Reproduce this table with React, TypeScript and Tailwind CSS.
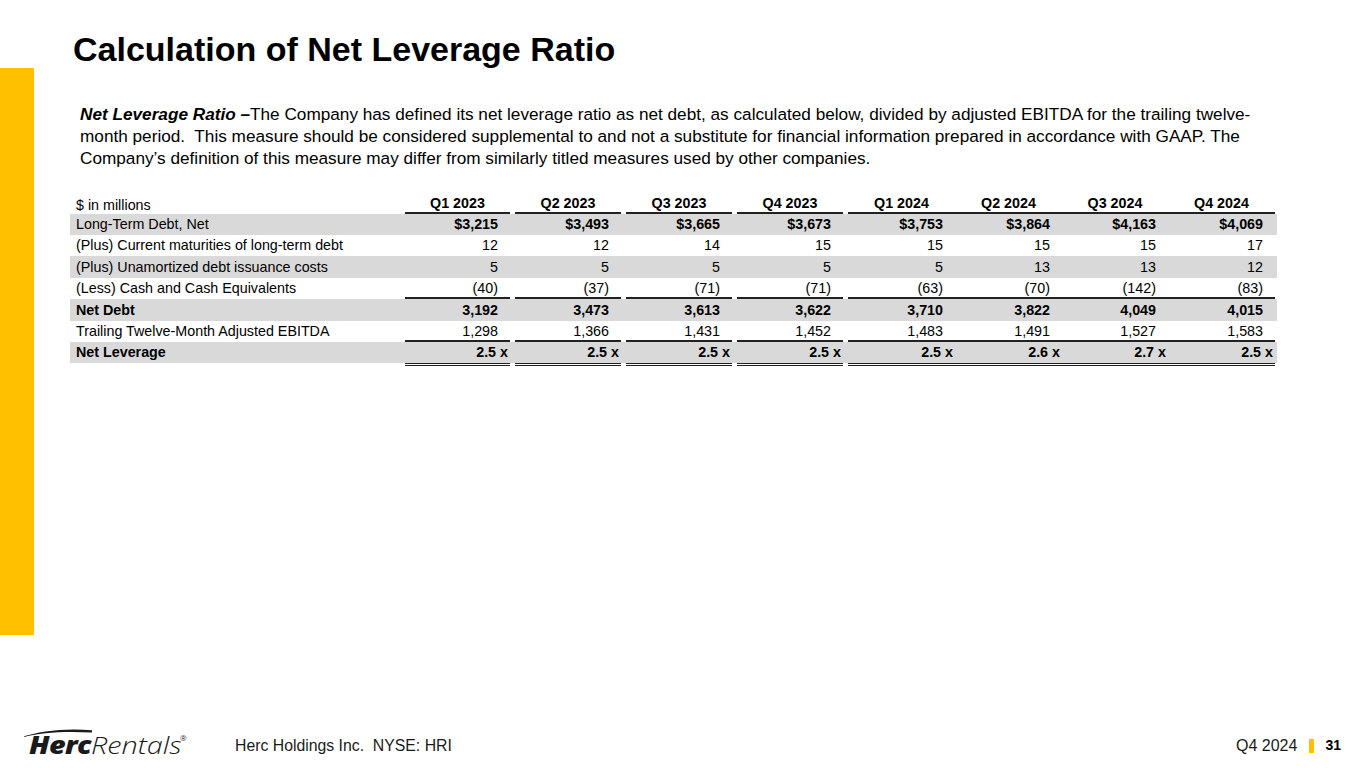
import React from 'react'

const cols = [
  { label: 'Q1 2023', w: 'w-[105px]', gap: false },
  { label: 'Q2 2023', w: 'w-[106px]', gap: true },
  { label: 'Q3 2023', w: 'w-[106px]', gap: true },
  { label: 'Q4 2023', w: 'w-[106px]', gap: true },
  { label: 'Q1 2024', w: 'w-[107px]', gap: true },
  { label: 'Q2 2024', w: 'w-[107px]', gap: false },
  { label: 'Q3 2024', w: 'w-[106px]', gap: false },
  { label: 'Q4 2024', w: 'w-[107px]', gap: false },
]

type Row = {
  label: string
  values: string[]
  h: string
  boldLabel?: boolean
  boldValues?: boolean
  shaded?: boolean
  underline?: boolean
  ratio?: boolean
}

const rows: Row[] = [
  { label: 'Long-Term Debt, Net', values: ['$3,215', '$3,493', '$3,665', '$3,673', '$3,753', '$3,864', '$4,163', '$4,069'], h: 'h-[21px] leading-[21px]', boldValues: true, shaded: true },
  { label: '(Plus) Current maturities of long-term debt', values: ['12', '12', '14', '15', '15', '15', '15', '17'], h: 'h-[21px] leading-[21px]' },
  { label: '(Plus) Unamortized debt issuance costs', values: ['5', '5', '5', '5', '5', '13', '13', '12'], h: 'h-[22px] leading-[22px]', shaded: true },
  { label: '(Less) Cash and Cash Equivalents', values: ['(40)', '(37)', '(71)', '(71)', '(63)', '(70)', '(142)', '(83)'], h: 'h-[21px] leading-[20px]', underline: true },
  { label: 'Net Debt', values: ['3,192', '3,473', '3,613', '3,622', '3,710', '3,822', '4,049', '4,015'], h: 'h-[22px] leading-[22px]', boldLabel: true, boldValues: true, shaded: true },
  { label: 'Trailing Twelve-Month Adjusted EBITDA', values: ['1,298', '1,366', '1,431', '1,452', '1,483', '1,491', '1,527', '1,583'], h: 'h-[21px] leading-[20px]', underline: true },
  { label: 'Net Leverage', values: ['2.5 x', '2.5 x', '2.5 x', '2.5 x', '2.5 x', '2.6 x', '2.7 x', '2.5 x'], h: 'h-[21px] leading-[21px]', boldLabel: true, boldValues: true, shaded: true, ratio: true },
]

const HercLogo = () => (
  <div className="relative w-[206px] h-[30px] shrink-0" style={{ fontFamily: '"Open Sans", "Liberation Sans", sans-serif' }}>
    <svg className="absolute left-[-7px] top-[-1px]" width="72" height="10" viewBox="0 0 72 10">
      <path d="M0 9 C 18 3, 42 0, 70 2.2 L 70 4.6 C 44 2.8, 20 4.4, 0 9 Z" fill="#1a1a1a" />
    </svg>
    <div className="absolute left-0 top-[2px] flex items-baseline origin-left scale-x-[1.2] leading-[28px]">
      <span className="text-[24px] font-extrabold italic text-[#1a1a1a] tracking-[-0.5px]">Herc</span>
      <span className="text-[24px] font-light italic text-[#1a1a1a]">Rentals</span>
    </div>
    <span className="absolute left-[151px] top-[3px] text-[8px] text-[#333]">®</span>
  </div>
)

export default function App() {
  return (
    <div
      className="w-[1365px] h-[768px] bg-white flex flex-col overflow-hidden text-black"
      style={{ fontFamily: '"Liberation Sans", Arial, sans-serif' }}
    >
      <div className="flex flex-1">
        {/* yellow side bar */}
        <div className="w-[34px] shrink-0">
          <div className="mt-[68px] h-[567px] bg-[#FFC000]" />
        </div>

        <div className="flex flex-col pl-[36px]">
          <h1 className="ml-[3px] mt-[29px] text-[34px] leading-[40px] font-bold text-black">
            Calculation of Net Leverage Ratio
          </h1>

          <div className="ml-[10px] mt-[34px] text-[17.2px] leading-[22px] text-black whitespace-nowrap">
            <div>
              <span className="font-bold italic">Net Leverage Ratio –</span>The Company has defined its net leverage ratio as net debt, as calculated below, divided by adjusted EBITDA for the trailing twelve-
            </div>
            <div>month period.{'\u00a0 '}This measure should be considered supplemental to and not a substitute for financial information prepared in accordance with GAAP. The</div>
            <div>Company’s definition of this measure may differ from similarly titled measures used by other companies.</div>
          </div>

          {/* table */}
          <div className="mt-[24px] text-[14.3px]">
            <div className="flex h-[21px]">
              <div className="w-[335px] pl-[6px] self-end leading-[18px]">$ in millions</div>
              {cols.map(c => (
                <div
                  key={c.label}
                  className={`${c.w} ${c.gap ? 'ml-[5px]' : ''} flex items-end justify-center leading-[17px] font-bold border-b-2 border-[#222]`}
                >
                  {c.label}
                </div>
              ))}
            </div>

            {rows.map(r => (
              <div key={r.label} className={`flex w-[1207px] ${r.h} ${r.shaded ? 'bg-[#D9D9D9]' : ''}`}>
                <div className={`w-[335px] pl-[6px] ${r.boldLabel ? 'font-bold' : ''}`}>{r.label}</div>
                {r.values.map((v, i) => (
                  <div
                    key={i}
                    className={`${cols[i].w} ${cols[i].gap ? 'ml-[5px]' : ''} text-right ${r.ratio ? 'pr-[2px]' : 'pr-[12px]'} ${
                      r.boldValues ? 'font-bold' : ''
                    } ${r.underline ? 'border-b-2 border-[#222]' : ''}`}
                  >
                    {v}
                  </div>
                ))}
              </div>
            ))}

            <div className="flex">
              <div className="w-[335px]" />
              {cols.map(c => (
                <div key={c.label} className={`${c.w} ${c.gap ? 'ml-[5px]' : ''} h-[3px] border-t-[3px] border-double border-[#222]`} />
              ))}
            </div>
          </div>
        </div>
      </div>

      {/* footer */}
      <div className="h-[48px] flex items-center pl-[29px] pr-[24px]">
        <HercLogo />
        <div className="mt-[3px] text-[15.8px] text-[#1a1a1a]">Herc Holdings Inc.{'\u00a0 '}NYSE: HRI</div>
        <div className="ml-auto mt-[3px] flex items-center">
          <span className="text-[16px] text-[#1a1a1a]">Q4 2024</span>
          <span className="ml-[12px] w-[5px] h-[14px] bg-[#FFC000]" />
          <span className="ml-[11px] text-[14px] font-bold">31</span>
        </div>
      </div>
    </div>
  )
}
